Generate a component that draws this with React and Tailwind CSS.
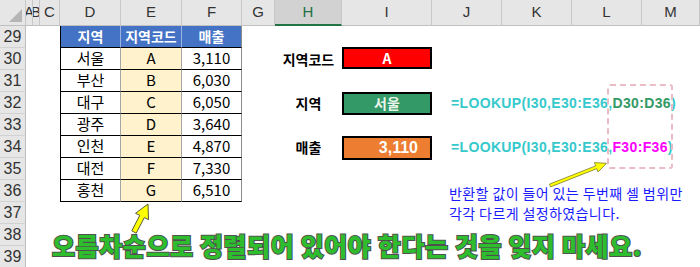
import React from "react";

const KR = "font-['Noto_Sans_CJK_KR',sans-serif]";
const LAT = "font-['Liberation_Sans','Noto_Sans_CJK_KR',sans-serif]";

const data = [
  ["서울", "A", "3,110"],
  ["부산", "B", "6,030"],
  ["대구", "C", "6,050"],
  ["광주", "D", "3,640"],
  ["인천", "E", "4,870"],
  ["대전", "F", "7,330"],
  ["홍천", "G", "6,510"],
];

function HeadCell({ w, children, active }) {
  return (
    <div
      className={
        "h-full flex items-center justify-center overflow-hidden border-r border-[#c8c8c8] text-[15px] " +
        w +
        (active
          ? " bg-[#d2d2d2] text-[#217346] border-b-2 border-b-[#217346]"
          : " text-[#333] border-b border-b-[#c0c0c0]")
      }
    >
      {children}
    </div>
  );
}

function Row({ n, children }) {
  return (
    <div className="flex h-[22px]">
      <div className={"w-[26px] shrink-0 h-full bg-[#e6e6e6] border-r border-[#bdbdbd] border-b border-b-[#d2d2d2] flex items-center justify-center text-[16px] text-[#333] " + LAT}>
        {n}
      </div>
      {children}
    </div>
  );
}

function Gap({ w }) {
  return <div className={"shrink-0 h-full " + w} />;
}

function TableCells({ d, e, f }) {
  return (
    <>
      <div className="w-[61px] shrink-0 h-full border-l border-l-black border-r border-r-[#a6a6a6] border-b border-b-black flex items-center justify-center text-[15px] text-black">
        {d}
      </div>
      <div className="w-[61px] shrink-0 h-full bg-[#fff2cc] border-r border-r-[#a6a6a6] border-b border-b-black flex items-center justify-center text-[15px] text-black">
        {e}
      </div>
      <div className="w-[60px] shrink-0 h-full border-r border-r-[#8c8c8c] border-b border-b-black flex items-center justify-center text-[15px] text-black">
        {f}
      </div>
    </>
  );
}

function RightPart({ label, box, formula }) {
  return (
    <>
      <Gap w="w-[33px]" />
      <div className="w-[67px] shrink-0 h-full flex items-center justify-center text-[14px] font-bold text-black">
        {label}
      </div>
      <div className="w-[90px] shrink-0 h-full">{box}</div>
      <div className="flex-1 h-full flex items-center pl-[19px] whitespace-nowrap overflow-visible">
        {formula}
      </div>
    </>
  );
}

function Formula({ last, color }) {
  return (
    <span className={LAT + " text-[14px] font-bold tracking-[0.35px] text-[#36c9cc]"}>
      =LOOKUP(I30,E30:E36,<span className={color}>{last}</span>)
    </span>
  );
}

export default function App() {
  return (
    <div className={"relative w-[700px] h-[267px] overflow-hidden bg-white " + KR}>
      {/* column header */}
      <div className={"flex h-[26px] bg-[#e6e6e6] " + LAT}>
        <div className="w-[26px] shrink-0 h-full border-r border-[#c8c8c8] border-b border-b-[#c0c0c0] relative">
          <div className="absolute right-[3px] bottom-[3px] w-0 h-0 border-l-[13px] border-l-transparent border-b-[13px] border-b-[#b5b5b5]" />
        </div>
        <HeadCell w="w-[7px] shrink-0">A</HeadCell>
        <HeadCell w="w-[7px] shrink-0">B</HeadCell>
        <HeadCell w="w-[20px] shrink-0">C</HeadCell>
        <HeadCell w="w-[61px] shrink-0">D</HeadCell>
        <HeadCell w="w-[61px] shrink-0">E</HeadCell>
        <HeadCell w="w-[60px] shrink-0">F</HeadCell>
        <HeadCell w="w-[33px] shrink-0">G</HeadCell>
        <HeadCell w="w-[67px] shrink-0" active>H</HeadCell>
        <HeadCell w="w-[90px] shrink-0">I</HeadCell>
        <HeadCell w="w-[70px] shrink-0">J</HeadCell>
        <HeadCell w="w-[70px] shrink-0">K</HeadCell>
        <HeadCell w="w-[70px] shrink-0">L</HeadCell>
        <HeadCell w="flex-1">M</HeadCell>
      </div>

      {/* row 29: table header */}
      <Row n="29">
        <Gap w="w-[34px]" />
        <div className="w-[61px] shrink-0 h-full bg-[#4472c4] border-l border-l-black border-r border-r-[#9db3df] border-b border-b-black flex items-center justify-center text-[14px] font-bold text-white">
          지역
        </div>
        <div className="w-[61px] shrink-0 h-full bg-[#4472c4] border-r border-r-[#9db3df] border-b border-b-black flex items-center justify-center text-[14px] font-bold text-white">
          지역코드
        </div>
        <div className="w-[60px] shrink-0 h-full bg-[#4472c4] border-r border-r-[#8c8c8c] border-b border-b-black flex items-center justify-center text-[14px] font-bold text-white">
          매출
        </div>
      </Row>

      {data.map((r, i) => {
        const n = 30 + i;
        let right = null;
        if (n === 30)
          right = (
            <RightPart
              label="지역코드"
              box={
                <div className="h-full -mt-px border-2 border-black bg-[#ff0000] flex items-center justify-center text-[14px] font-bold text-white">
                  A
                </div>
              }
            />
          );
        if (n === 32)
          right = (
            <RightPart
              label="지역"
              box={
                <div className="h-[23px] border-2 border-black bg-[#339966] flex items-center justify-center text-[14px] font-bold text-[#eaf5ea]">
                  서울
                </div>
              }
              formula={<Formula last="D30:D36" color="text-[#339966]" />}
            />
          );
        if (n === 34)
          right = (
            <RightPart
              label="매출"
              box={
                <div className={"h-[24px] border-2 border-black bg-[#ed7d31] flex items-center justify-end pr-[12px] text-[16px] font-bold text-white " + LAT}>
                  3,110
                </div>
              }
              formula={<Formula last="F30:F36" color="text-[#ff00ff]" />}
            />
          );
        return (
          <Row key={n} n={String(n)}>
            <Gap w="w-[34px]" />
            <TableCells d={r[0]} e={r[1]} f={r[2]} />
            {right}
          </Row>
        );
      })}

      <Row n="37" />
      <Row n="38" />
      <Row n="39" />

      {/* dashed highlight box */}
      <div className="absolute left-[607px] top-[84px] w-[66px] h-[85px] border-2 border-dashed border-[#ecbcc4] rounded-[3px]" />

      {/* arrows */}
      <svg className="absolute left-0 top-0 pointer-events-none" width="700" height="267" viewBox="0 0 700 267">
        <polygon
          points="148,204 148.5,219.7 144.3,217.6 136.2,233.2 131.8,230.8 139.8,215.3 135.5,213.3"
          fill="#ffff00"
          stroke="#5a5a3a"
          strokeWidth="1"
          strokeLinejoin="round"
        />
        <polygon
          points="606.5,163.3 598,172 596.7,168.7 550.5,186.9 549.5,184.1 595.7,165.9 594.4,162.6"
          fill="#ffff00"
          stroke="#7a7a30"
          strokeWidth="0.8"
          strokeLinejoin="round"
        />
      </svg>

      {/* blue note */}
      <div className="absolute left-[449px] top-[183px] text-[14px] leading-[20px] text-[#1a1aff] tracking-[0.4px] whitespace-nowrap">
        <div>반환할 값이 들어 있는 두번째 셀 범위만</div>
        <div>각각 다르게 설정하였습니다.</div>
      </div>

      {/* big green note */}
      <div className="absolute left-[52px] top-[229px] text-[25px] leading-[32px] font-black tracking-[0.6px] text-[#2dbd2d] whitespace-nowrap [-webkit-text-stroke:2px_#505050] [paint-order:stroke_fill]">
        오름차순으로 정렬되어 있어야 한다는 것을 잊지 마세요.
      </div>
    </div>
  );
}
